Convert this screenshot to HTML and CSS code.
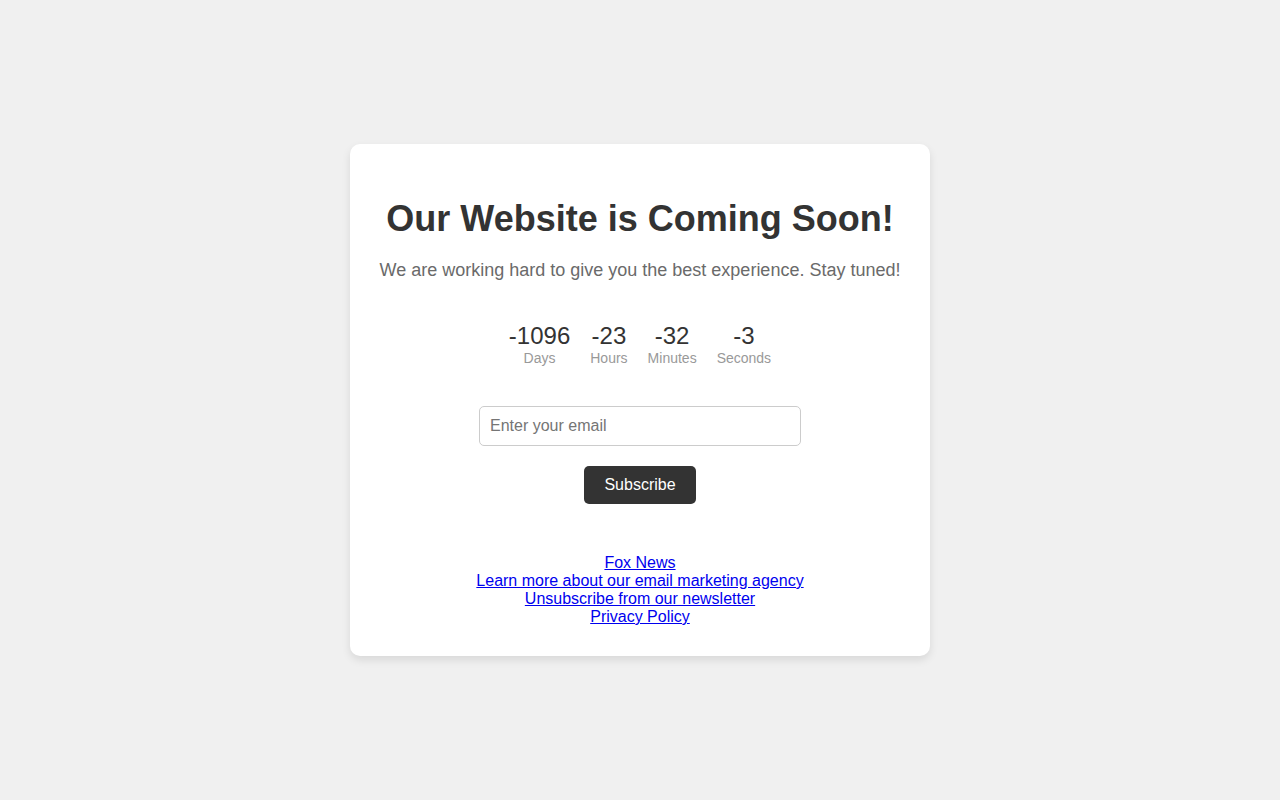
FILE: index.html
```html
<!DOCTYPE html>
<html lang="en">
<head>
<meta charset="utf-8">
<title>Coming Soon</title>
<link rel="stylesheet" href="styles.css">
</head>
<body>
<div class="card">
  <h1 class="title">Our Website is Coming Soon!</h1>
  <p class="lead">We are working hard to give you the best experience. Stay tuned!</p>
  <div class="countdown">
    <div class="unit"><span class="num">-1096</span><span class="label">Days</span></div>
    <div class="unit"><span class="num">-23</span><span class="label">Hours</span></div>
    <div class="unit"><span class="num">-32</span><span class="label">Minutes</span></div>
    <div class="unit"><span class="num">-3</span><span class="label">Seconds</span></div>
  </div>
  <form class="subscribe">
    <input class="email" type="email" placeholder="Enter your email">
    <button class="btn" type="button">Subscribe</button>
  </form>
  <div class="links">
    <a href="#">Fox News</a><br>
    <a href="#">Learn more about our email marketing agency</a><br>
    <a href="#">Unsubscribe from our newsletter</a><br>
    <a href="#">Privacy Policy</a>
  </div>
</div>
</body>
</html>
```

FILE: styles.css
```css
html, body {
  margin: 0;
  padding: 0;
}
body {
  background: #f0f0f0;
  font-family: "Liberation Sans", Arial, sans-serif;
  height: 100vh;
  display: flex;
  align-items: center;
  justify-content: center;
}
.card {
  background: #fff;
  width: 540px;
  padding: 30px 20px;
  border-radius: 10px;
  box-shadow: 0 4px 8px rgba(0, 0, 0, 0.1);
  text-align: center;
}
.title {
  font-size: 36px;
  font-weight: bold;
  color: #333;
  margin: 24px 0 20px;
}
.lead {
  font-size: 18px;
  color: #6a6a6a;
  margin: 0 0 41px;
}
.countdown {
  display: flex;
  justify-content: center;
  gap: 20px;
  margin-bottom: 40px;
}
.unit {
  display: flex;
  flex-direction: column;
  align-items: center;
}
.num {
  font-size: 24px;
  color: #333;
}
.label {
  font-size: 14px;
  color: #999;
}
.subscribe {
  display: flex;
  flex-direction: column;
  align-items: center;
  gap: 20px;
  margin: 0;
}
.email {
  width: 300px;
  padding: 10px;
  font-size: 16px;
  font-family: "Liberation Sans", Arial, sans-serif;
  border: 1px solid #ccc;
  border-radius: 5px;
  outline: none;
}
.email::placeholder {
  color: #757575;
}
.btn {
  padding: 10px 20px;
  font-size: 16px;
  font-family: "Liberation Sans", Arial, sans-serif;
  background: #333;
  color: #fff;
  border: none;
  border-radius: 5px;
  cursor: pointer;
}
.links {
  margin-top: 50px;
  font-size: 16px;
}
.links a {
  color: #0000ee;
}
```
